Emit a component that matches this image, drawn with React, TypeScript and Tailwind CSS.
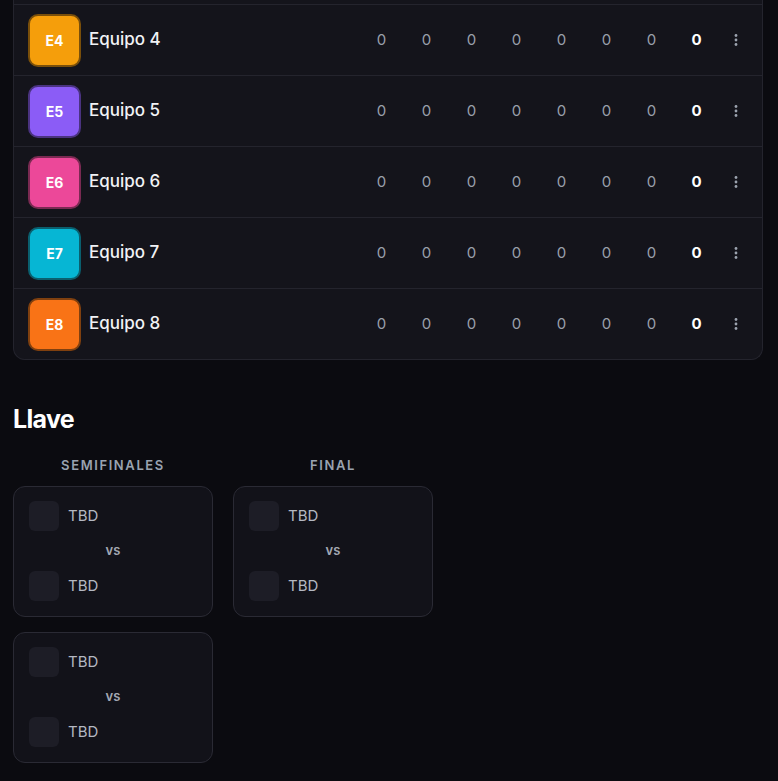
import React from 'react'

interface Team {
  code: string
  name: string
  bg: string
  ring: string
}

const teams: Team[] = [
  { code: 'E4', name: 'Equipo 4', bg: 'bg-[#f59e0b]', ring: 'border-[#7a4f0a]' },
  { code: 'E5', name: 'Equipo 5', bg: 'bg-[#8b5cf6]', ring: 'border-[#4a3380]' },
  { code: 'E6', name: 'Equipo 6', bg: 'bg-[#ec4899]', ring: 'border-[#7a2a52]' },
  { code: 'E7', name: 'Equipo 7', bg: 'bg-[#06b6d4]', ring: 'border-[#0a5f6e]' },
  { code: 'E8', name: 'Equipo 8', bg: 'bg-[#f97316]', ring: 'border-[#80400f]' },
]

function Dots() {
  return (
    <svg width="4" height="14" viewBox="0 0 4 14" fill="#9ca3af">
      <circle cx="2" cy="2.5" r="1.4" />
      <circle cx="2" cy="7" r="1.4" />
      <circle cx="2" cy="11.5" r="1.4" />
    </svg>
  )
}

function TeamRow({ team }: { team: Team }) {
  return (
    <div className="flex h-[71px] items-center border-t border-[#24242d] pl-[14px] pr-[10px]">
      <div
        className={`flex h-[53px] w-[53px] items-center justify-center rounded-[10px] border-2 ${team.bg} ${team.ring} text-[14px] font-bold text-white`}
      >
        {team.code}
      </div>
      <span className="ml-[8px] text-[17px] font-medium text-[#f1f2f5]">{team.name}</span>
      <div className="ml-auto flex items-center">
        {Array.from({ length: 7 }).map((_, i) => (
          <span key={i} className="w-[45px] text-center text-[15px] text-[#9aa0ab]">
            0
          </span>
        ))}
        <span className="w-[45px] text-center text-[15px] font-bold text-white">0</span>
        <span className="flex w-[33px] justify-center">
          <Dots />
        </span>
      </div>
    </div>
  )
}

function Slot() {
  return (
    <div className="flex h-[30px] items-center gap-[9px]">
      <div className="h-[30px] w-[30px] rounded-md bg-[#1d1d26]" />
      <span className="text-[15px] text-[#b4b8c2]">TBD</span>
    </div>
  )
}

function MatchCard() {
  return (
    <div className="flex h-[131px] w-[200px] flex-col rounded-xl border border-[#2a2a34] bg-[#121219] pl-[15px] pt-[14px]">
      <Slot />
      <div className="-ml-[15px] flex h-[40px] items-center justify-center text-[13px] font-semibold text-[#a3a8b3]">
        vs
      </div>
      <Slot />
    </div>
  )
}

export default function App() {
  return (
    <div
      className="min-h-screen bg-[#0b0b10] px-[13px] pb-6"
      style={{ fontFamily: 'Inter, "Noto Sans", sans-serif' }}
    >
      <div className="w-[750px] rounded-b-xl border-x border-b border-[#24242d] bg-[#14141b]">
        <div className="h-[4px]" />
        {teams.map((t) => (
          <TeamRow key={t.code} team={t} />
        ))}
      </div>

      <h2 className="mt-[41px] text-[25px] font-bold tracking-[-0.7px] text-white">Llave</h2>

      <div className="mt-[17px] flex gap-[20px]">
        <div className="flex flex-col">
          <div className="mb-[11px] text-center text-[13px] font-semibold tracking-[1.6px] text-[#9aa3b0]">
            SEMIFINALES
          </div>
          <div className="flex flex-col gap-[15px]">
            <MatchCard />
            <MatchCard />
          </div>
        </div>
        <div className="flex flex-col">
          <div className="mb-[11px] text-center text-[13px] font-semibold tracking-[1.6px] text-[#9aa3b0]">
            FINAL
          </div>
          <MatchCard />
        </div>
      </div>
    </div>
  )
}
